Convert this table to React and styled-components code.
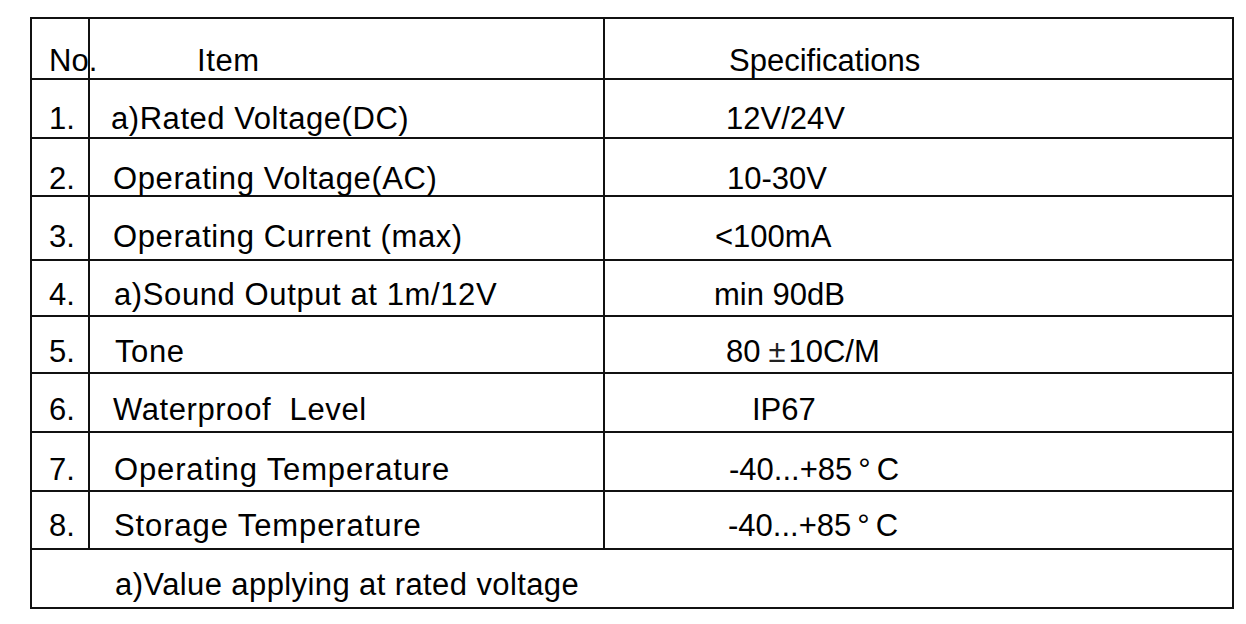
import styled, {createGlobalStyle} from 'styled-components';

const Global = createGlobalStyle`
  body {
    margin: 0;
    background: #ffffff;
  }
`

let Sheet = styled.div`
  margin: 17px 0 0 30px;
  width: 1204px;
  box-sizing: border-box;
  border: 2px solid #111;
  display: grid;
  grid-template-columns: 58px 515px 627px;
  grid-template-rows: 61px 59px 58px 64px 56px 57px 59px 59px 58px 57px;

  font-family: "Liberation Sans", Arial, sans-serif;
  font-size: 31px;
  line-height: 1;
  color: #000;
`

let Cell = styled.div`
  box-sizing: border-box;
  padding-top: ${props => props.top}px;
  padding-left: ${props => props.indent}px;
  border-bottom: ${props => props.last ? 'none' : '2px solid #111'};
  border-right: ${props => props.edge ? 'none' : '2px solid #111'};
  grid-column: ${props => props.span ? '1 / 4' : 'auto'};
  letter-spacing: ${props => props.spacing || 0}px;
  white-space: pre;
  overflow: visible;
`

// 숫자 칸: 점(.)이 세로줄 밖으로 삐져나옴
let NoCell = styled(Cell)`
  position: relative;
  z-index: 1;
`

let Sym = styled.span`
  display: inline-block;
  margin: ${props => props.gap};
  color: ${props => props.thin ? '#222' : '#000'};
`

const rows = [
    {no: 'No.', item: 'Item', spec: 'Specifications', top: 26, itemX: 107, specX: 124, sp: 0.6},
    {no: '1.', item: 'a)Rated Voltage(DC)', spec: '12V/24V', top: 23, itemX: 21, specX: 121, sp: 0.55},
    {no: '2.', item: 'Operating Voltage(AC)', spec: '10-30V', top: 24, itemX: 23, specX: 122, sp: 0.6},
    {no: '3.', item: 'Operating Current (max)', spec: '<100mA', top: 24, itemX: 23, specX: 110, sp: 0.6},
    {no: '4.', item: 'a)Sound Output at 1m/12V', spec: 'min 90dB', top: 18, itemX: 24, specX: 109, sp: 0.6},
    {no: '5.', item: 'Tone', spec: 'pm', top: 19, itemX: 25, specX: 121, sp: 0.6},
    {no: '6.', item: 'Waterproof  Level', spec: 'IP67', top: 20, itemX: 23, specX: 147, sp: 0.6},
    {no: '7.', item: 'Operating Temperature', spec: 'deg', top: 21, itemX: 24, specX: 124, sp: 0.85},
    {no: '8.', item: 'Storage Temperature', spec: 'deg', top: 18, itemX: 24, specX: 123, sp: 0.9},
]

function Spec({value}){
    if (value === 'pm') {
        return <>80<Sym thin gap="0 3px 0 8px">±</Sym>10C/M</>
    }
    if (value === 'deg') {
        return <>-40...+85<Sym gap="0 6px 0 6px">°</Sym>C</>
    }
    return value
}

function App(){
    return(
        <>
            <Global/>
            <Sheet>
                {rows.map((r, i) => (
                    <>
                        <NoCell key={'n' + i} top={r.top} indent={17}>{r.no}</NoCell>
                        <Cell key={'i' + i} top={r.top} indent={r.itemX} spacing={r.sp}>{r.item}</Cell>
                        <Cell key={'s' + i} top={r.top} indent={r.specX} edge>
                            <Spec value={r.spec}/>
                        </Cell>
                    </>
                ))}
                <Cell span edge last spacing={0.4} top={19} indent={83}>a)Value applying at rated voltage</Cell>
            </Sheet>
        </>
    )
}

export default App;
